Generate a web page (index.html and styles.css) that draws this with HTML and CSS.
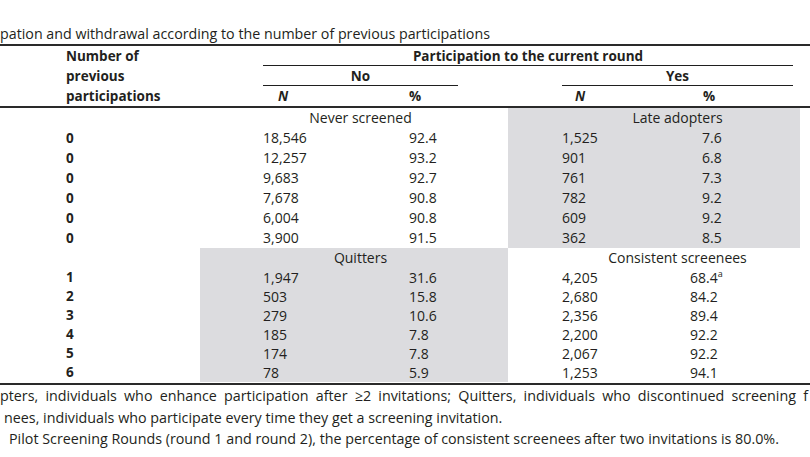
FILE: index.html
```html
<!DOCTYPE html>
<html lang="en">
<head>
<meta charset="utf-8">
<title>Participation and withdrawal</title>
<link rel="stylesheet" href="styles.css">
</head>
<body>
<div class="page">
  <p class="caption">pation and withdrawal according to the number of previous participations</p>
  <div class="table">
    <div class="head">
      <div class="row">
        <div class="lab">Number of</div>
        <div class="span-all"><div class="uline u-all">Participation to the current round</div></div>
      </div>
      <div class="row">
        <div class="lab">previous</div>
        <div class="span-no"><div class="uline u-no">No</div></div>
        <div class="span-yes"><div class="uline u-yes">Yes</div></div>
        <div></div>
      </div>
      <div class="row">
        <div class="lab">participations</div>
        <div class="h-nn"><i>N</i></div>
        <div class="h-np">%</div>
        <div class="h-yn"><i>N</i></div>
        <div class="h-yp">%</div>
        <div></div>
      </div>
    </div>
    <div class="body">
      <div class="row">
        <div class="lab"></div>
        <div class="grp-no">Never screened</div>
        <div class="grp-yes shade">Late adopters</div>
        <div></div>
      </div>
      <div class="row"><div class="lab">0</div><div class="nn">18,546</div><div class="np">92.4</div><div class="yn shade">1,525</div><div class="yp shade">7.6</div><div></div></div>
      <div class="row"><div class="lab">0</div><div class="nn">12,257</div><div class="np">93.2</div><div class="yn shade">901</div><div class="yp shade">6.8</div><div></div></div>
      <div class="row"><div class="lab">0</div><div class="nn">9,683</div><div class="np">92.7</div><div class="yn shade">761</div><div class="yp shade">7.3</div><div></div></div>
      <div class="row"><div class="lab">0</div><div class="nn">7,678</div><div class="np">90.8</div><div class="yn shade">782</div><div class="yp shade">9.2</div><div></div></div>
      <div class="row"><div class="lab">0</div><div class="nn">6,004</div><div class="np">90.8</div><div class="yn shade">609</div><div class="yp shade">9.2</div><div></div></div>
      <div class="row"><div class="lab">0</div><div class="nn">3,900</div><div class="np">91.5</div><div class="yn shade">362</div><div class="yp shade">8.5</div><div></div></div>
      <div class="row">
        <div class="lab"></div>
        <div class="grp-no shade">Quitters</div>
        <div class="grp-yes">Consistent screenees</div>
        <div></div>
      </div>
      <div class="row tight"><div class="lab">1</div><div class="nn shade">1,947</div><div class="np shade">31.6</div><div class="yn">4,205</div><div class="yp2">68.4<sup>a</sup></div><div></div></div>
      <div class="row tight"><div class="lab">2</div><div class="nn shade">503</div><div class="np shade">15.8</div><div class="yn">2,680</div><div class="yp2">84.2</div><div></div></div>
      <div class="row tight"><div class="lab">3</div><div class="nn shade">279</div><div class="np shade">10.6</div><div class="yn">2,356</div><div class="yp2">89.4</div><div></div></div>
      <div class="row tight"><div class="lab">4</div><div class="nn shade">185</div><div class="np shade">7.8</div><div class="yn">2,200</div><div class="yp2">92.2</div><div></div></div>
      <div class="row tight"><div class="lab">5</div><div class="nn shade">174</div><div class="np shade">7.8</div><div class="yn">2,067</div><div class="yp2">92.2</div><div></div></div>
      <div class="row tight"><div class="lab">6</div><div class="nn shade">78</div><div class="np shade">5.9</div><div class="yn">1,253</div><div class="yp2">94.1</div><div></div></div>
    </div>
  </div>
  <div class="notes">
    <p class="note note-1">pters, individuals who enhance participation after &ge;2 invitations; Quitters, individuals who discontinued screening f</p>
    <p class="note note-2">nees, individuals who participate every time they get a screening invitation.</p>
    <p class="note note-3">Pilot Screening Rounds (round 1 and round 2), the percentage of consistent screenees after two invitations is 80.0%.</p>
  </div>
</div>
</body>
</html>
```

FILE: styles.css
```css
html, body {
  margin: 0;
  padding: 0;
  background: #ffffff;
}

body {
  width: 810px;
  height: 457px;
  overflow: hidden;
  font-family: "Open Sans", "DejaVu Sans", sans-serif;
  font-size: 14px;
  color: #231f20;
}

.page {
  width: 810px;
}

.caption {
  margin: 0;
  padding-top: 24px;
  line-height: 20px;
  height: 20px;
  font-size: 14.25px;
  white-space: nowrap;
}

.table {
  width: 810px;
}

.head {
  border-top: 2px solid #2a2a2a;
  border-bottom: 2px solid #2a2a2a;
}

.body {
  border-bottom: 2px solid #2a2a2a;
  padding-bottom: 1px;
}

.row {
  display: grid;
  grid-template-columns: 200px 205px 103px 182px 110px 10px;
  height: 20px;
  line-height: 20px;
  white-space: nowrap;
}

.row.tight {
  height: 19px;
  line-height: 19px;
}

.lab {
  padding-left: 66px;
  font-weight: 700;
  font-size: 13.5px;
}

.head .row {
  font-weight: 700;
  font-size: 13.5px;
}

.span-all {
  grid-column: 2 / 7;
}

.span-no {
  grid-column: 2 / 4;
}

.span-yes {
  grid-column: 4 / 6;
}

.uline {
  box-sizing: border-box;
  height: 20px;
  text-align: center;
  border-bottom: 1.5px solid #1f1f1f;
}

.u-all {
  margin-left: 63px;
  width: 530px;
}

.u-no {
  margin-left: 63px;
  width: 195px;
}

.u-yes {
  margin-left: 54px;
  width: 231px;
}

.h-nn { padding-left: 78px; }
.h-np { padding-left: 4px; }
.h-yn { padding-left: 67px; }
.h-yp { padding-left: 13px; }

.grp-no {
  grid-column: 2 / 4;
  padding: 0 50px 0 63px;
  text-align: center;
}

.grp-yes {
  grid-column: 4 / 6;
  padding: 0 7px 0 54px;
  text-align: center;
}

.nn { padding-left: 63px; }
.np { padding-left: 4px; }
.yn { padding-left: 54px; }
.yp { padding-left: 12px; }
.yp2 { padding-left: 0; }

.shade {
  background: #dcdcdf;
}

sup {
  font-size: 9px;
  line-height: 0;
  vertical-align: 6px;
}

.notes {
  padding-top: 0;
}

.note {
  margin: 0;
  line-height: 21.5px;
  font-size: 14.3px;
  white-space: nowrap;
}

.note-1 {
  width: 808px;
  white-space: normal;
  text-align: justify;
  text-align-last: justify;
}

.note-2 {
  padding-left: 4px;
}

.note-3 {
  padding-left: 9px;
}
```
